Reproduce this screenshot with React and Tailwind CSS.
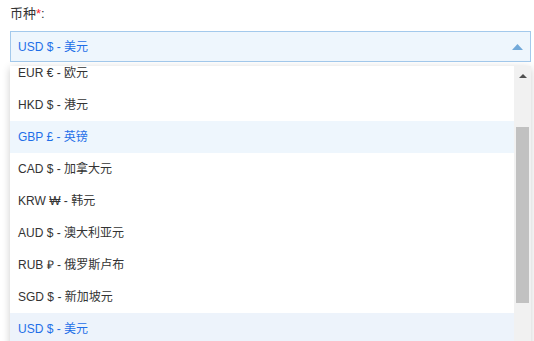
const currencies = [
  { code: "EUR", sym: "€", name: "欧元" },
  { code: "HKD", sym: "$", name: "港元" },
  { code: "GBP", sym: "£", name: "英镑", hover: true },
  { code: "CAD", sym: "$", name: "加拿大元" },
  { code: "KRW", sym: "₩", name: "韩元" },
  { code: "AUD", sym: "$", name: "澳大利亚元" },
  { code: "RUB", sym: "₽", name: "俄罗斯卢布" },
  { code: "SGD", sym: "$", name: "新加坡元" },
  { code: "USD", sym: "$", name: "美元", selected: true },
];

export default function App() {
  return (
    <div
      className="w-[534px] h-[341px] overflow-hidden bg-white pl-[10px] pr-[3px] pt-[5px] text-[12px] text-[#333]"
      style={{ fontFamily: '"Liberation Sans", "Noto Sans CJK SC", sans-serif' }}
    >
      <div className="h-[17px] leading-[17px] text-[13px]">
        币种<span className="text-[#f5222d]">*</span>:
      </div>

      <div className="mt-[9px] h-[31px] flex items-center justify-between border border-[#a3c9ec] bg-[#eef6fd] pl-[7px] pr-[6px] text-[#1e6fe8]">
        <span>USD $ - 美元</span>
        <svg width="11" height="6" viewBox="0 0 11 6" className="mr-[1px]">
          <path d="M0 6 L5.5 0 L11 6 Z" fill="#72a9d9" />
        </svg>
      </div>

      <div className="mt-[4px] h-[300px] flex bg-white shadow-[0_2px_8px_rgba(0,0,0,0.2)]">
        <div className="flex-1 overflow-hidden">
          <div className="-mt-[9px]">
            {currencies.map((c) => (
              <div
                key={c.code}
                className={
                  "h-[32px] flex items-center pl-[8px] " +
                  (c.selected
                    ? "bg-[#edf3fb] text-[#1e6fe8]"
                    : c.hover
                    ? "bg-[#eef6fd] text-[#1e6fe8]"
                    : "")
                }
              >
                {c.code} {c.sym} - {c.name}
              </div>
            ))}
          </div>
        </div>
        <div className="w-[17px] bg-[#f1f1f1] flex flex-col items-center">
          <div className="h-[20px] flex items-center justify-center">
            <svg width="8" height="4" viewBox="0 0 8 4">
              <path d="M0 4 L4 0 L8 4 Z" fill="#505050" />
            </svg>
          </div>
          <div className="mt-[41px] w-[13px] h-[176px] bg-[#c1c1c1]" />
        </div>
      </div>
    </div>
  );
}
